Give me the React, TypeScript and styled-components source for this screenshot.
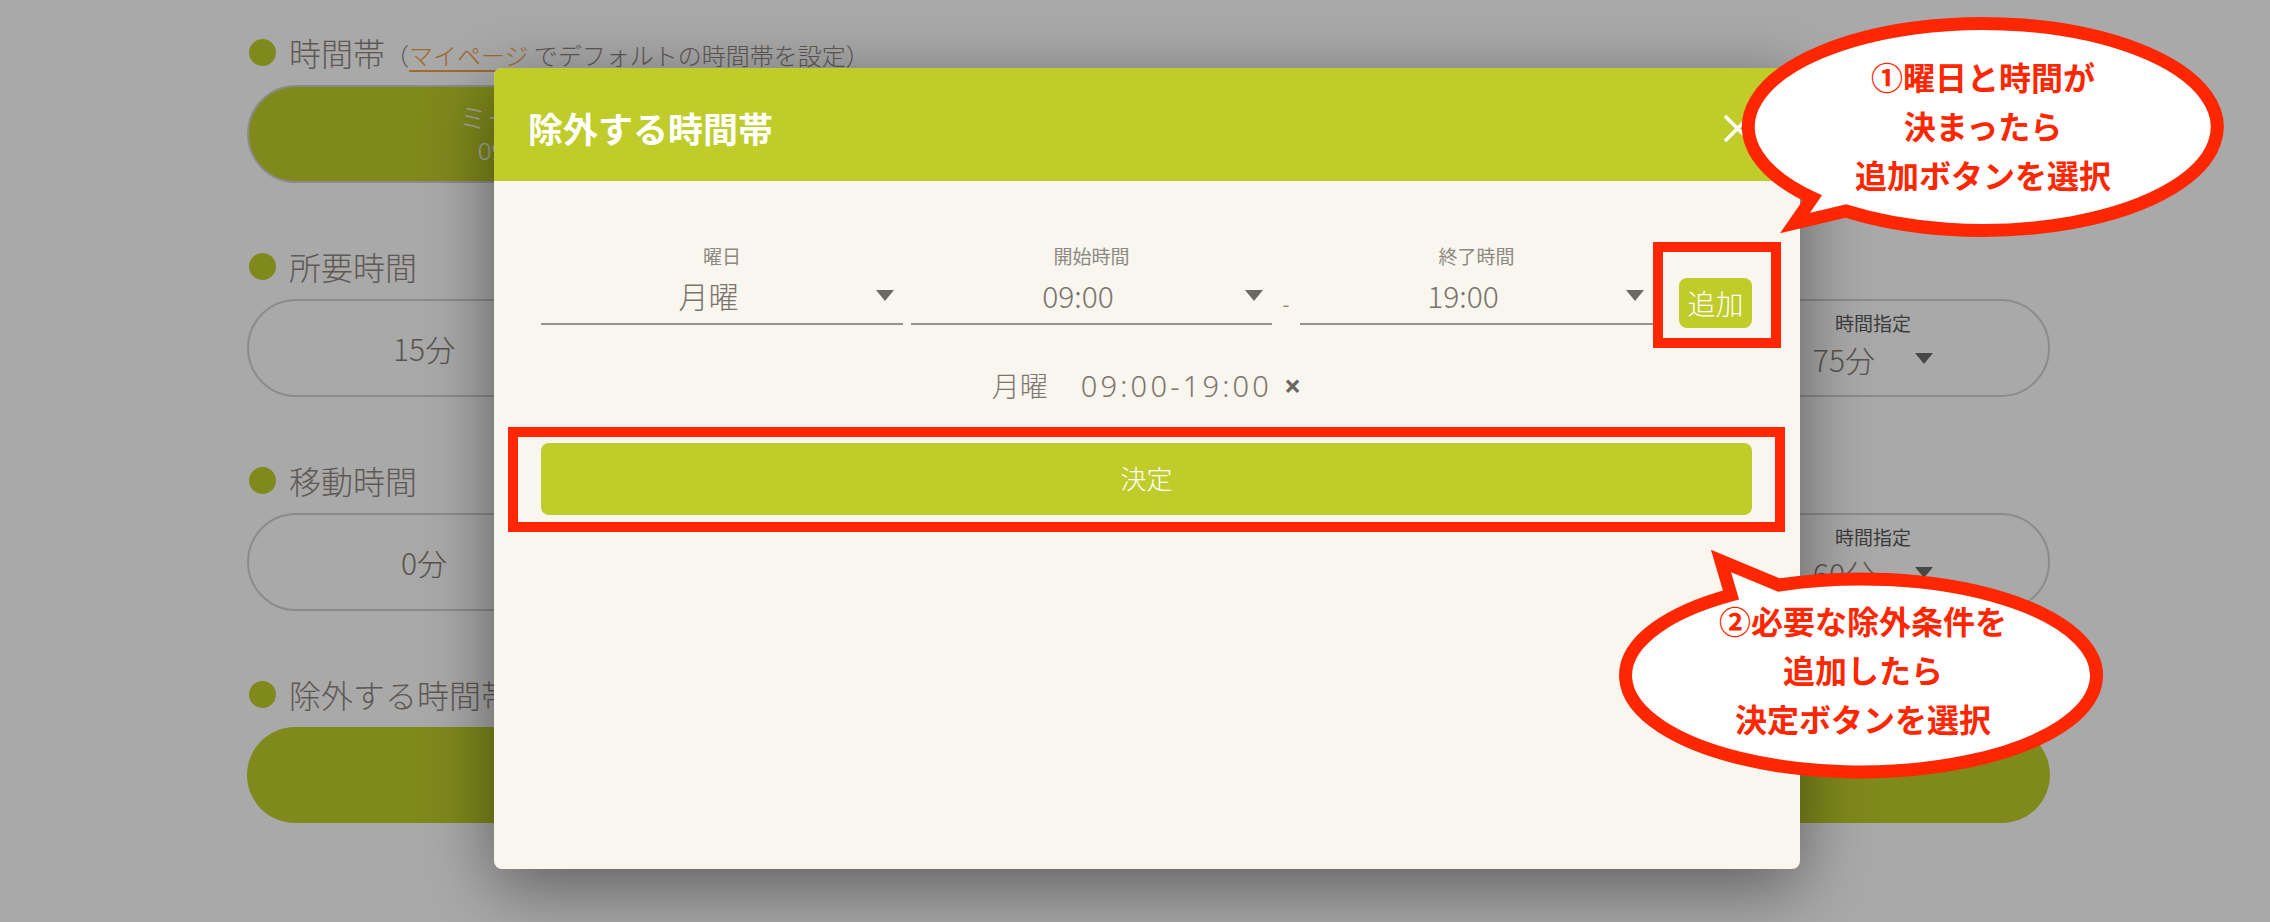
import React from "react";
import styled, { createGlobalStyle } from "styled-components";

const GlobalStyle = createGlobalStyle`
  html, body {
    margin: 0;
    padding: 0;
  }
  body {
    font-family: "Noto Sans CJK JP", "Noto Sans", sans-serif;
  }
  * {
    box-sizing: border-box;
  }
`;

const OLIVE = "#bfcc2a";
const RED = "#ff2600";

const bubbles = [
  {
    left: 1742,
    top: 17,
    width: 482,
    height: 220,
    shift: 4,
    path: "M 104 194 A 234.5 103.5 0 1 0 70.3 181 L 53 206 Z",
    lines: ["①曜日と時間が", "決まったら", "追加ボタンを選択"],
  },
  {
    left: 1621,
    top: 572,
    width: 484,
    height: 206,
    shift: 12,
    path: "M 158 13 A 235.5 96.5 0 1 1 110 23 L 100 -11 Z",
    lines: ["②必要な除外条件を", "追加したら", "決定ボタンを選択"],
  },
];

const TimeSpec = ({ value }: { value: string }) => (
  <Pill>
    <SpecLabel>時間指定</SpecLabel>
    <SpecValue>
      <span>{value}</span>
      <Caret $color="#6a6a6a" />
    </SpecValue>
  </Pill>
);

const SelectBox = ({ label, value, width }: { label: string; value: string; width: number }) => (
  <Select $width={width}>
    <SelectLabel>{label}</SelectLabel>
    <SelectField>
      <SelectValue>{value}</SelectValue>
      <Caret $color="#6c6864" />
    </SelectField>
  </Select>
);

const App = () => {
  return (
    <Page>
      <GlobalStyle />
      <Content>
        <Section>
          <SectionTitle>
            <Dot />
            時間帯
            <Hint>
              （<HintLink>マイページ</HintLink> でデフォルトの時間帯を設定）
            </Hint>
          </SectionTitle>
          <PillRow $cols={3} $gap={16}>
            <Pill $active>
              <PillName>ミーティング</PillName>
              <PillSub>09:00-19:00</PillSub>
            </Pill>
            <Pill>
              <PillName>ランチ</PillName>
              <PillSub>12:00-13:00</PillSub>
            </Pill>
            <Pill>
              <PillName>カスタム</PillName>
              <PillSub>10:00-18:00</PillSub>
            </Pill>
          </PillRow>
        </Section>

        <Section>
          <SectionTitle>
            <Dot />
            所要時間
          </SectionTitle>
          <PillRow $cols={5} $gap={8}>
            <Pill>15分</Pill>
            <Pill>30分</Pill>
            <Pill>45分</Pill>
            <Pill>60分</Pill>
            <TimeSpec value="75分" />
          </PillRow>
        </Section>

        <Section>
          <SectionTitle>
            <Dot />
            移動時間
          </SectionTitle>
          <PillRow $cols={5} $gap={8}>
            <Pill>0分</Pill>
            <Pill>15分</Pill>
            <Pill>30分</Pill>
            <Pill>45分</Pill>
            <TimeSpec value="60分" />
          </PillRow>
        </Section>

        <Section>
          <SectionTitle>
            <Dot />
            除外する時間帯
          </SectionTitle>
          <WidePill>除外する時間帯を追加</WidePill>
        </Section>
      </Content>

      <Overlay>
        <Modal>
          <ModalHeader>
            <ModalTitle>除外する時間帯</ModalTitle>
            <CloseButton aria-label="close">
              <svg width="29" height="29" viewBox="0 0 29 29">
                <path d="M2 2 L27 27 M27 2 L2 27" stroke="#ffffff" strokeWidth="3.6" />
              </svg>
            </CloseButton>
          </ModalHeader>
          <ModalBody>
            <SelectRow>
              <SelectBox label="曜日" value="月曜" width={362} />
              <Gap $w={8} />
              <SelectBox label="開始時間" value="09:00" width={361} />
              <Dash>-</Dash>
              <SelectBox label="終了時間" value="19:00" width={353} />
              <Highlight $ml={26} $mb={-3}>
                <AddButton>追加</AddButton>
                <RedFrame $t={-36} $r={-29} $b={-20} $l={-26} />
              </Highlight>
            </SelectRow>
            <Summary>
              月曜<Space />
              <SummaryTime>09:00-19:00</SummaryTime>
              <RemoveMark>×</RemoveMark>
            </Summary>
            <Highlight $mt={38}>
              <DecideButton>決定</DecideButton>
              <RedFrame $t={-16} $r={-33} $b={-17} $l={-33} />
            </Highlight>
          </ModalBody>
        </Modal>
      </Overlay>

      {bubbles.map((b, i) => (
        <Bubble
          key={i}
          $left={b.left}
          $top={b.top}
          $width={b.width}
          $height={b.height}
          $shift={b.shift}
        >
          <BubbleShape viewBox={`0 0 ${b.width} ${b.height}`} width={b.width} height={b.height}>
            <path
              d={b.path}
              fill="#ffffff"
              stroke={RED}
              strokeWidth="13"
              strokeLinejoin="miter"
              strokeMiterlimit="10"
            />
          </BubbleShape>
          {b.lines.map((l) => (
            <BubbleLine key={l}>{l}</BubbleLine>
          ))}
        </Bubble>
      ))}
    </Page>
  );
};

export default App;

const Page = styled.div`
  position: relative;
  width: 2270px;
  height: 922px;
  overflow: hidden;
  background-color: #fcfcfc;
`;

const Content = styled.div`
  display: flex;
  flex-direction: column;
  gap: 63px;
  padding: 32px 220px 0 247px;
`;

const Section = styled.section`
  display: flex;
  flex-direction: column;
  gap: 13px;
`;

const SectionTitle = styled.div`
  display: flex;
  align-items: center;
  height: 40px;
  padding-left: 2px;
  font-size: 32px;
  font-weight: 300;
  color: #8d857f;
  white-space: nowrap;
`;

const Dot = styled.span`
  width: 27px;
  height: 27px;
  margin-right: 13px;
  border-radius: 50%;
  background-color: ${OLIVE};
  flex-shrink: 0;
`;

const Hint = styled.span`
  font-size: 24px;
  margin-top: 4px;
`;

const HintLink = styled.span`
  color: #f0a040;
  text-decoration: underline;
  text-underline-offset: 5px;
  text-decoration-thickness: 2px;
`;

const PillRow = styled.div<{ $cols: number; $gap: number }>`
  display: grid;
  grid-template-columns: repeat(${(p) => p.$cols}, minmax(0, 1fr));
  gap: ${(p) => p.$gap}px;
  height: 98px;
`;

const Pill = styled.div<{ $active?: boolean }>`
  display: flex;
  flex-direction: column;
  align-items: center;
  justify-content: center;
  border: 2px solid #d0d0d0;
  border-radius: 49px;
  background-color: ${(p) => (p.$active ? OLIVE : "transparent")};
  color: ${(p) => (p.$active ? "#ffffff" : "#857d77")};
  font-size: 30px;
  font-weight: 300;
`;

const PillName = styled.div`
  font-size: 28px;
  line-height: 34px;
`;

const PillSub = styled.div`
  font-family: "Noto Sans", sans-serif;
  font-size: 24px;
  line-height: 34px;
`;

const SpecLabel = styled.div`
  font-size: 19px;
  line-height: 24px;
  color: #5a5a5a;
  font-weight: 400;
`;

const SpecValue = styled.div`
  display: flex;
  align-items: center;
  gap: 40px;
  margin-top: 4px;
  padding-bottom: 7px;
  line-height: 40px;
  color: #857d77;
`;

const WidePill = styled.div`
  display: flex;
  align-items: center;
  justify-content: center;
  height: 96px;
  border-radius: 48px;
  background-color: ${OLIVE};
  color: #ffffff;
  font-size: 28px;
`;

const Caret = styled.span<{ $color: string }>`
  width: 0;
  height: 0;
  border-left: 9px solid transparent;
  border-right: 9px solid transparent;
  border-top: 11px solid ${(p) => p.$color};
  flex-shrink: 0;
`;

const Overlay = styled.div`
  position: absolute;
  inset: 0;
  display: flex;
  align-items: flex-start;
  padding: 68px 0 0 494px;
  background-color: rgba(0, 0, 0, 0.33);
`;

const Modal = styled.div`
  display: flex;
  flex-direction: column;
  width: 1306px;
  height: 801px;
  border-radius: 8px;
  overflow: hidden;
  background-color: #f9f6ef;
  box-shadow: 0 18px 70px rgba(0, 0, 0, 0.45);
`;

const ModalHeader = styled.div`
  display: flex;
  align-items: center;
  justify-content: space-between;
  height: 113px;
  padding: 6px 48px 0 34px;
  background-color: ${OLIVE};
  flex-shrink: 0;
`;

const ModalTitle = styled.h2`
  margin: 0;
  font-size: 35px;
  font-weight: 700;
  color: #ffffff;
`;

const CloseButton = styled.button`
  display: flex;
  margin-top: 2px;
  padding: 0;
  border: 0;
  background: none;
  cursor: pointer;
`;

const ModalBody = styled.div`
  display: flex;
  flex-direction: column;
  padding: 64px 48px 0 47px;
`;

const SelectRow = styled.div`
  display: flex;
  align-items: flex-end;
`;

const Select = styled.div<{ $width: number }>`
  display: flex;
  flex-direction: column;
  width: ${(p) => p.$width}px;
  flex-shrink: 0;
`;

const SelectLabel = styled.div`
  font-size: 19px;
  line-height: 22px;
  color: #8d8882;
  text-align: center;
`;

const SelectField = styled.div`
  display: flex;
  align-items: center;
  height: 50px;
  margin-top: 8px;
  padding: 0 9px 8px 0;
  border-bottom: 2px solid #96928c;
`;

const SelectValue = styled.div`
  flex: 1;
  font-size: 30px;
  font-weight: 300;
  line-height: 40px;
  color: #7a736c;
  text-align: center;
`;

const Gap = styled.div<{ $w: number }>`
  width: ${(p) => p.$w}px;
  flex-shrink: 0;
`;

const Dash = styled.div`
  width: 28px;
  margin-bottom: 11px;
  font-size: 20px;
  line-height: 20px;
  color: #8d8882;
  text-align: center;
  flex-shrink: 0;
`;

const Highlight = styled.div<{ $ml?: number; $mb?: number; $mt?: number }>`
  position: relative;
  display: flex;
  margin-left: ${(p) => p.$ml ?? 0}px;
  margin-bottom: ${(p) => p.$mb ?? 0}px;
  margin-top: ${(p) => p.$mt ?? 0}px;
`;

const RedFrame = styled.div<{ $t: number; $r: number; $b: number; $l: number }>`
  position: absolute;
  top: ${(p) => p.$t}px;
  right: ${(p) => p.$r}px;
  bottom: ${(p) => p.$b}px;
  left: ${(p) => p.$l}px;
  border: 10px solid ${RED};
  pointer-events: none;
`;

const AddButton = styled.button`
  width: 73px;
  height: 50px;
  padding: 0;
  border: 0;
  border-radius: 8px;
  background-color: ${OLIVE};
  color: #ffffff;
  font-family: inherit;
  font-size: 28px;
  font-weight: 300;
  cursor: pointer;
`;

const Summary = styled.div`
  display: flex;
  align-items: center;
  justify-content: center;
  margin-top: 40px;
  height: 40px;
  font-size: 28px;
  font-weight: 300;
  color: #7d756e;
`;

const Space = styled.span`
  width: 33px;
`;

const SummaryTime = styled.span`
  font-family: "Noto Sans", sans-serif;
  font-size: 29px;
  font-weight: 300;
  letter-spacing: 3.2px;
`;

const RemoveMark = styled.span`
  margin-left: 12px;
  font-family: "Noto Sans", sans-serif;
  font-size: 30px;
  font-weight: 700;
  color: #6b6560;
`;

const DecideButton = styled.button`
  width: 100%;
  height: 72px;
  padding: 0 0 4px;
  border: 0;
  border-radius: 8px;
  background-color: ${OLIVE};
  color: #ffffff;
  font-family: inherit;
  font-size: 26px;
  font-weight: 300;
  cursor: pointer;
`;

const Bubble = styled.div<{
  $left: number;
  $top: number;
  $width: number;
  $height: number;
  $shift: number;
}>`
  position: absolute;
  left: ${(p) => p.$left}px;
  top: ${(p) => p.$top}px;
  width: ${(p) => p.$width}px;
  height: ${(p) => p.$height}px;
  display: flex;
  flex-direction: column;
  align-items: center;
  justify-content: center;
  padding-bottom: ${(p) => p.$shift}px;
`;

const BubbleShape = styled.svg`
  position: absolute;
  left: 0;
  top: 0;
  overflow: visible;
`;

const BubbleLine = styled.div`
  position: relative;
  font-size: 32px;
  font-weight: 700;
  line-height: 49px;
  color: ${RED};
  white-space: nowrap;
`;
